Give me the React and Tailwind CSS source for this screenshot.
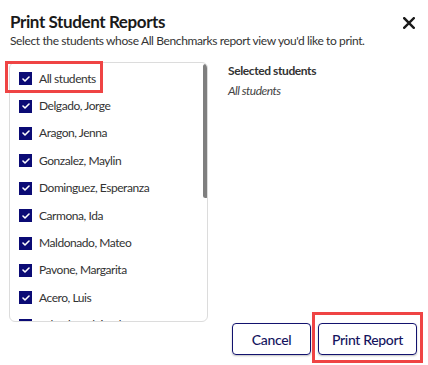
import { useState } from "react";

const students = [
  "All students",
  "Delgado, Jorge",
  "Aragon, Jenna",
  "Gonzalez, Maylin",
  "Dominguez, Esperanza",
  "Carmona, Ida",
  "Maldonado, Mateo",
  "Pavone, Margarita",
  "Acero, Luis",
  "Salvador, Alejandro",
];

function Check() {
  return (
    <span className="flex items-center justify-center w-[13px] h-[13px] bg-[#0b0b75] shrink-0">
      <svg width="8" height="6" viewBox="0 0 8 6">
        <path d="M1 3 L3 5 L7 1" stroke="white" strokeWidth="1.6" fill="none" strokeLinecap="round" strokeLinejoin="round" />
      </svg>
    </span>
  );
}

export default function App() {
  const [checked] = useState(students.map(() => true));

  return (
    <div className="relative w-[428px] h-[365px] bg-white pl-[9px] pr-[11px] pt-[10px] text-[#333] font-['Lato','Liberation_Sans',sans-serif]">
      {/* header */}
      <div className="flex items-start justify-between">
        <h1 className="ml-[1px] text-[17px] leading-[24px] font-bold tracking-[-0.4px] text-[#1a1a1a]">Print Student Reports</h1>
        <button className="mt-[7px] mr-[2px]">
          <svg width="12" height="12" viewBox="0 0 12 12">
            <path d="M1.2 1.2 L10.8 10.8 M10.8 1.2 L1.2 10.8" stroke="#1a1a1a" strokeWidth="2.4" strokeLinecap="square" />
          </svg>
        </button>
      </div>
      <p className="ml-[1px] text-[12px] leading-[14px] tracking-[-0.38px] text-[#333]">
        Select the students whose All Benchmarks report view you'd like to print.
      </p>

      <div className="flex mt-[14px] gap-[20px]">
        {/* student list */}
        <div className="relative w-[199px] h-[260px] border border-[#dcdcdc] rounded-[6px] overflow-hidden pt-[2px] self-start">
          {students.map((name, i) => (
            <label key={name} className="flex items-center h-[27.4px] pl-[9px] gap-[7px] text-[12px] tracking-[-0.45px]">
              {checked[i] && <Check />}
              <span className="text-[#333]">{name}</span>
            </label>
          ))}
          <div className="absolute right-[-1px] top-[1px] w-[5px] h-[134px] rounded-full bg-[#7f7f7f]" />
        </div>

        {/* selected + actions */}
        <div className="flex-1 h-[293px] flex flex-col pt-[1px]">
          <p className="text-[12px] leading-[16px] font-bold tracking-[-0.4px] text-[#333]">Selected students</p>
          <p className="mt-[4px] text-[12px] leading-[16px] italic tracking-[-0.5px] text-[#444]">All students</p>
          <div className="mt-auto flex justify-end gap-[7px]">
            <button className="w-[79px] h-[32px] rounded-[4px] border-[1.5px] border-[#12126e] text-[14px] font-medium tracking-[-0.35px] text-[#14145e] shadow-[0_1px_2px_rgba(0,0,0,0.25)]">
              Cancel
            </button>
            <button className="w-[99px] h-[32px] rounded-[4px] border-[1.5px] border-[#12126e] text-[14px] font-medium tracking-[-0.35px] text-[#14145e] shadow-[0_1px_2px_rgba(0,0,0,0.25)]">
              Print Report
            </button>
          </div>
        </div>
      </div>

      {/* highlight annotations */}
      <div className="absolute left-[5px] top-[61px] w-[98px] h-[32px] border-[3px] border-[#ef4444] pointer-events-none" />
      <div className="absolute left-[312px] top-[312px] w-[111px] h-[51px] border-[3px] border-[#ef4444] pointer-events-none" />
    </div>
  );
}
